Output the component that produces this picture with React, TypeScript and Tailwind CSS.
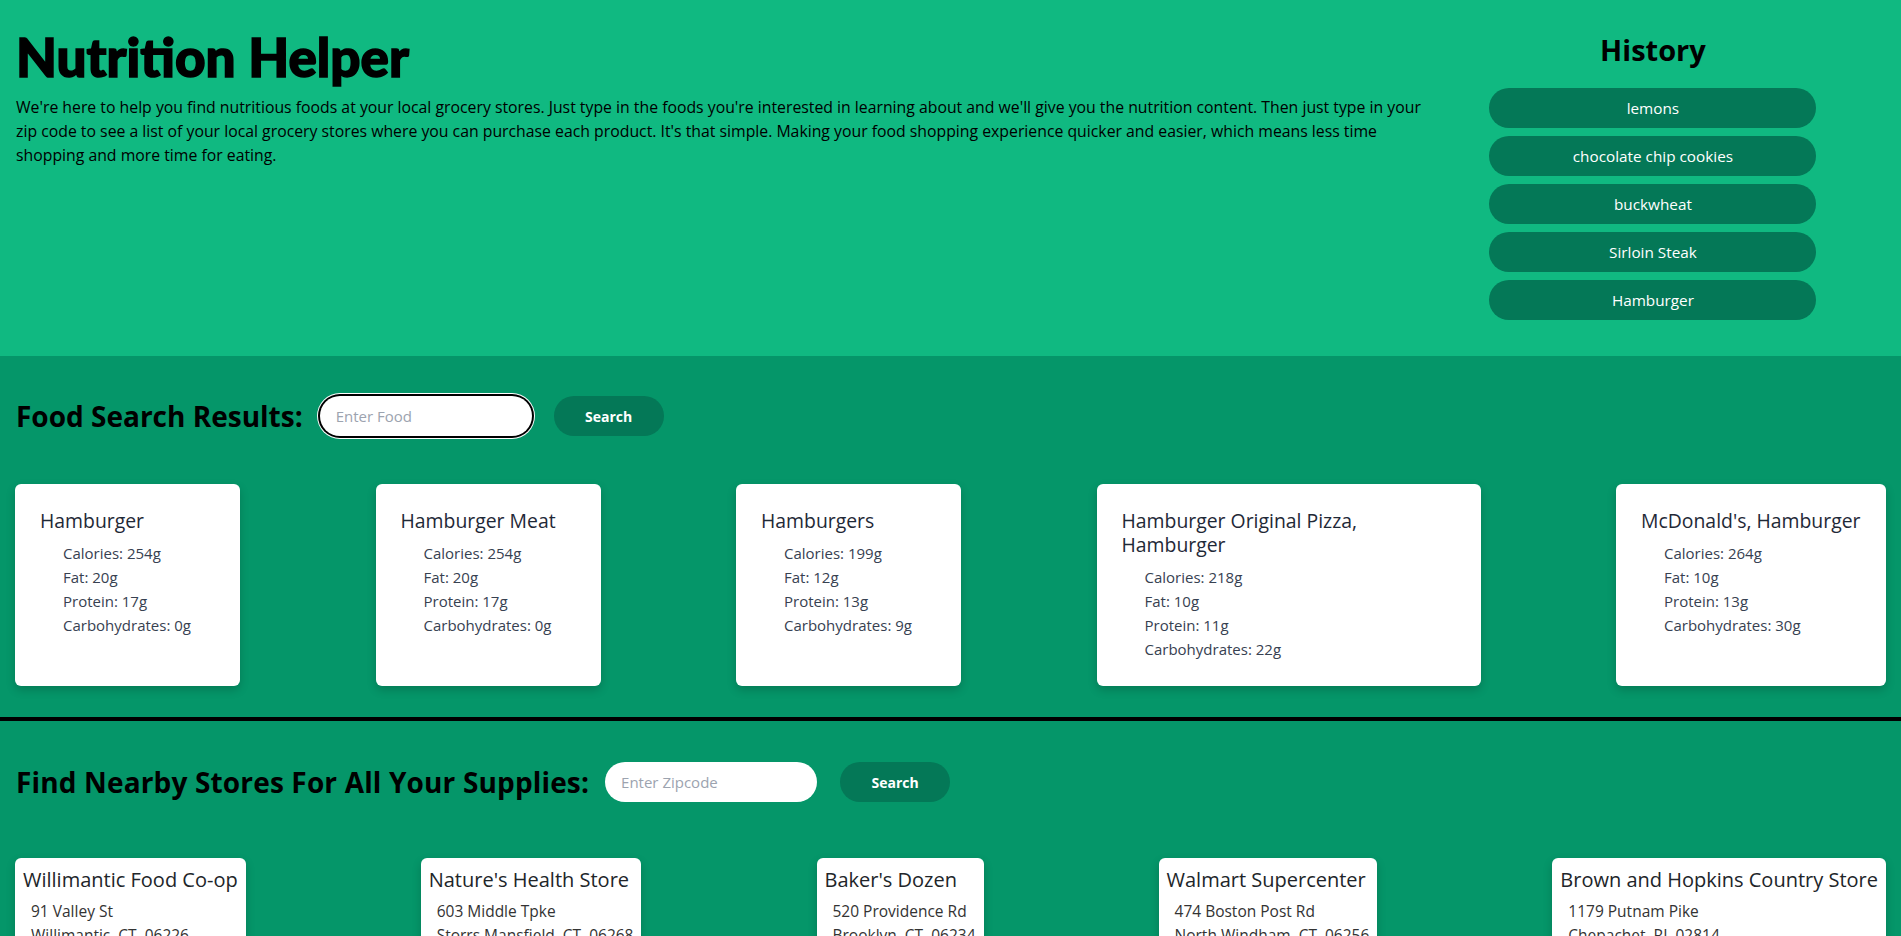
import React from "react";

type Food = {
  name: string;
  w: string;
  titleCls: string;
  cal: number;
  fat: number;
  pro: number;
  carb: number;
};

const foods: Food[] = [
  { name: "Hamburger", w: "w-[225px]", titleCls: "", cal: 254, fat: 20, pro: 17, carb: 0 },
  { name: "Hamburger Meat", w: "w-[225px]", titleCls: "", cal: 254, fat: 20, pro: 17, carb: 0 },
  { name: "Hamburgers", w: "w-[225px]", titleCls: "", cal: 199, fat: 12, pro: 13, carb: 9 },
  { name: "Hamburger Original Pizza, Hamburger", w: "w-[384px]", titleCls: "max-w-[260px]", cal: 218, fat: 10, pro: 11, carb: 22 },
  { name: "McDonald's, Hamburger", w: "w-[270px]", titleCls: "whitespace-nowrap", cal: 264, fat: 10, pro: 13, carb: 30 },
];

const stores = [
  { name: "Willimantic Food Co-op", street: "91 Valley St", city: "Willimantic, CT, 06226" },
  { name: "Nature's Health Store", street: "603 Middle Tpke", city: "Storrs Mansfield, CT, 06268" },
  { name: "Baker's Dozen", street: "520 Providence Rd", city: "Brooklyn, CT, 06234" },
  { name: "Walmart Supercenter", street: "474 Boston Post Rd", city: "North Windham, CT, 06256" },
  { name: "Brown and Hopkins Country Store", street: "1179 Putnam Pike", city: "Chepachet, RI, 02814" },
];

const history = ["lemons", "chocolate chip cookies", "buckwheat", "Sirloin Steak", "Hamburger"];

export default function App() {
  return (
    <div className="h-screen overflow-hidden font-['Open_Sans','Noto_Sans',sans-serif] text-black">
      <header className="h-[356px] bg-[#10b981] flex">
        <div className="flex-1 pl-4">
          <h1 className="mt-[30px] font-['Lato','Open_Sans',sans-serif] text-[53px] leading-none font-black tracking-[0px] [-webkit-text-stroke:1.5px_black]">
            Nutrition Helper
          </h1>
          <p className="mt-3 text-[15.8px] leading-6 whitespace-nowrap">
            We're here to help you find nutritious foods at your local grocery stores. Just type in the foods you're interested in learning about and we'll give you the nutrition content. Then just type in your
            <br />
            zip code to see a list of your local grocery stores where you can purchase each product. It's that simple. Making your food shopping experience quicker and easier, which means less time
            <br />
            shopping and more time for eating.
          </p>
        </div>
        <aside className="w-[466px] mr-4 flex flex-col items-center pt-8">
          <h2 className="text-[29px] leading-9 font-bold">History</h2>
          <div className="mt-5 flex flex-col gap-2">
            {history.map((h) => (
              <button
                key={h}
                className="w-[327px] h-10 rounded-full bg-[#047857] text-white text-[15.3px]"
              >
                {h}
              </button>
            ))}
          </div>
        </aside>
      </header>

      <section className="bg-[#059669] pt-10 pb-[31px] border-b-4 border-black">
        <div className="flex items-center h-10 pl-4">
          <h2 className="text-[28px] font-bold leading-none whitespace-nowrap">Food Search Results:</h2>
          <input
            placeholder="Enter Food"
            className="ml-[17px] w-[212px] h-10 rounded-full bg-white px-4 text-[15px] outline-none shadow-[0_0_0_2px_#000,0_0_0_3px_#fff] placeholder:text-[#9ca3af]"
          />
          <button className="ml-[22px] w-[110px] h-10 rounded-full bg-[#047857] text-white font-bold text-[14px]">
            Search
          </button>
        </div>
        <div className="mt-12 flex justify-between px-[15px]">
          {foods.map((f) => (
            <div
              key={f.name}
              className={`${f.w} bg-white rounded-md p-[25px] shadow-[0_4px_10px_rgba(0,0,0,0.18)]`}
            >
              <h3 className={`${f.titleCls} text-[19.4px] leading-6 text-[#1f2937]`}>{f.name}</h3>
              <ul className="mt-2 pl-[23px] text-[15px] leading-6 text-[#374151]">
                <li>Calories: {f.cal}g</li>
                <li>Fat: {f.fat}g</li>
                <li>Protein: {f.pro}g</li>
                <li>Carbohydrates: {f.carb}g</li>
              </ul>
            </div>
          ))}
        </div>
      </section>

      <section className="bg-[#059669] pt-[41px] pb-10">
        <div className="flex items-center h-10 pl-4">
          <h2 className="text-[28px] font-bold leading-none whitespace-nowrap tracking-[0.15px]">
            Find Nearby Stores For All Your Supplies:
          </h2>
          <input
            placeholder="Enter Zipcode"
            className="ml-4 w-[212px] h-10 rounded-full bg-white px-4 text-[15px] outline-none placeholder:text-[#9ca3af]"
          />
          <button className="ml-[23px] w-[110px] h-10 rounded-full bg-[#047857] text-white font-bold text-[14px]">
            Search
          </button>
        </div>
        <div className="mt-14 flex justify-between items-start px-[15px]">
          {stores.map((s) => (
            <div
              key={s.name}
              className="bg-white rounded-md px-[8px] pt-[10px] pb-3 shadow-[0_4px_10px_rgba(0,0,0,0.18)]"
            >
              <h3 className="text-[20px] leading-6 text-[#212529] whitespace-nowrap">{s.name}</h3>
              <div className="mt-[7px] pl-2 text-[15.5px] leading-6 text-[#333]">
                <p>{s.street}</p>
                <p>{s.city}</p>
                <p>(860) 456-3611</p>
              </div>
            </div>
          ))}
        </div>
      </section>
    </div>
  );
}
